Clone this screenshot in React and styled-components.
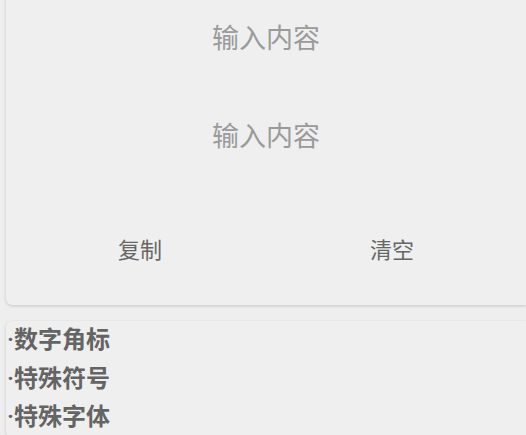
import React from "react";
import styled, { createGlobalStyle } from "styled-components";

const GlobalStyle = createGlobalStyle`
  html, body {
    margin: 0;
    padding: 0;
    background: #eeeeee;
    overflow: hidden;
    font-family: Roboto, "Noto Sans CJK SC", sans-serif;
  }
`;

const Page = styled.div`
  width: 526px;
  height: 435px;
  overflow: hidden;
`;

const Card = styled.section`
  margin: ${({ $top }) => $top} 0 0 6px;
  background: #efefef;
  border-radius: 6px 0 0 6px;
  box-shadow: 0 1px 3px rgba(0, 0, 0, 0.18);
`;

const Field = styled.input`
  display: block;
  width: 100%;
  height: 98px;
  box-sizing: border-box;
  border: none;
  outline: none;
  background: transparent;
  text-align: center;
  font-family: inherit;
  font-size: 27px;
  color: #333;

  &::placeholder {
    color: #9a9a9a;
  }
`;

const Actions = styled.div`
  display: flex;
  height: 119px;
  padding: 4px 8px 0;
  box-sizing: border-box;
  align-items: center;
`;

const Action = styled.button`
  flex: 1;
  height: 64px;
  border: none;
  background: transparent;
  font-family: inherit;
  font-size: 22px;
  color: #666;
  cursor: pointer;
`;

const List = styled.ul`
  list-style: none;
  margin: 0;
  padding: 0 0 0 1px;
`;

const Item = styled.li`
  font-size: 24px;
  line-height: 38.5px;
  font-weight: 600;
  color: #646464;
`;

const tools = ["数字角标", "特殊符号", "特殊字体"];

const App = () => {
  return (
    <Page>
      <GlobalStyle />
      <Card $top="-10px">
        <Field placeholder="输入内容" />
        <Field placeholder="输入内容" />
        <Actions>
          <Action>复制</Action>
          <Action>清空</Action>
        </Actions>
      </Card>
      <Card $top="16px">
        <List>
          {tools.map((t) => (
            <Item key={t}>·{t}</Item>
          ))}
        </List>
      </Card>
    </Page>
  );
};

export default App;
